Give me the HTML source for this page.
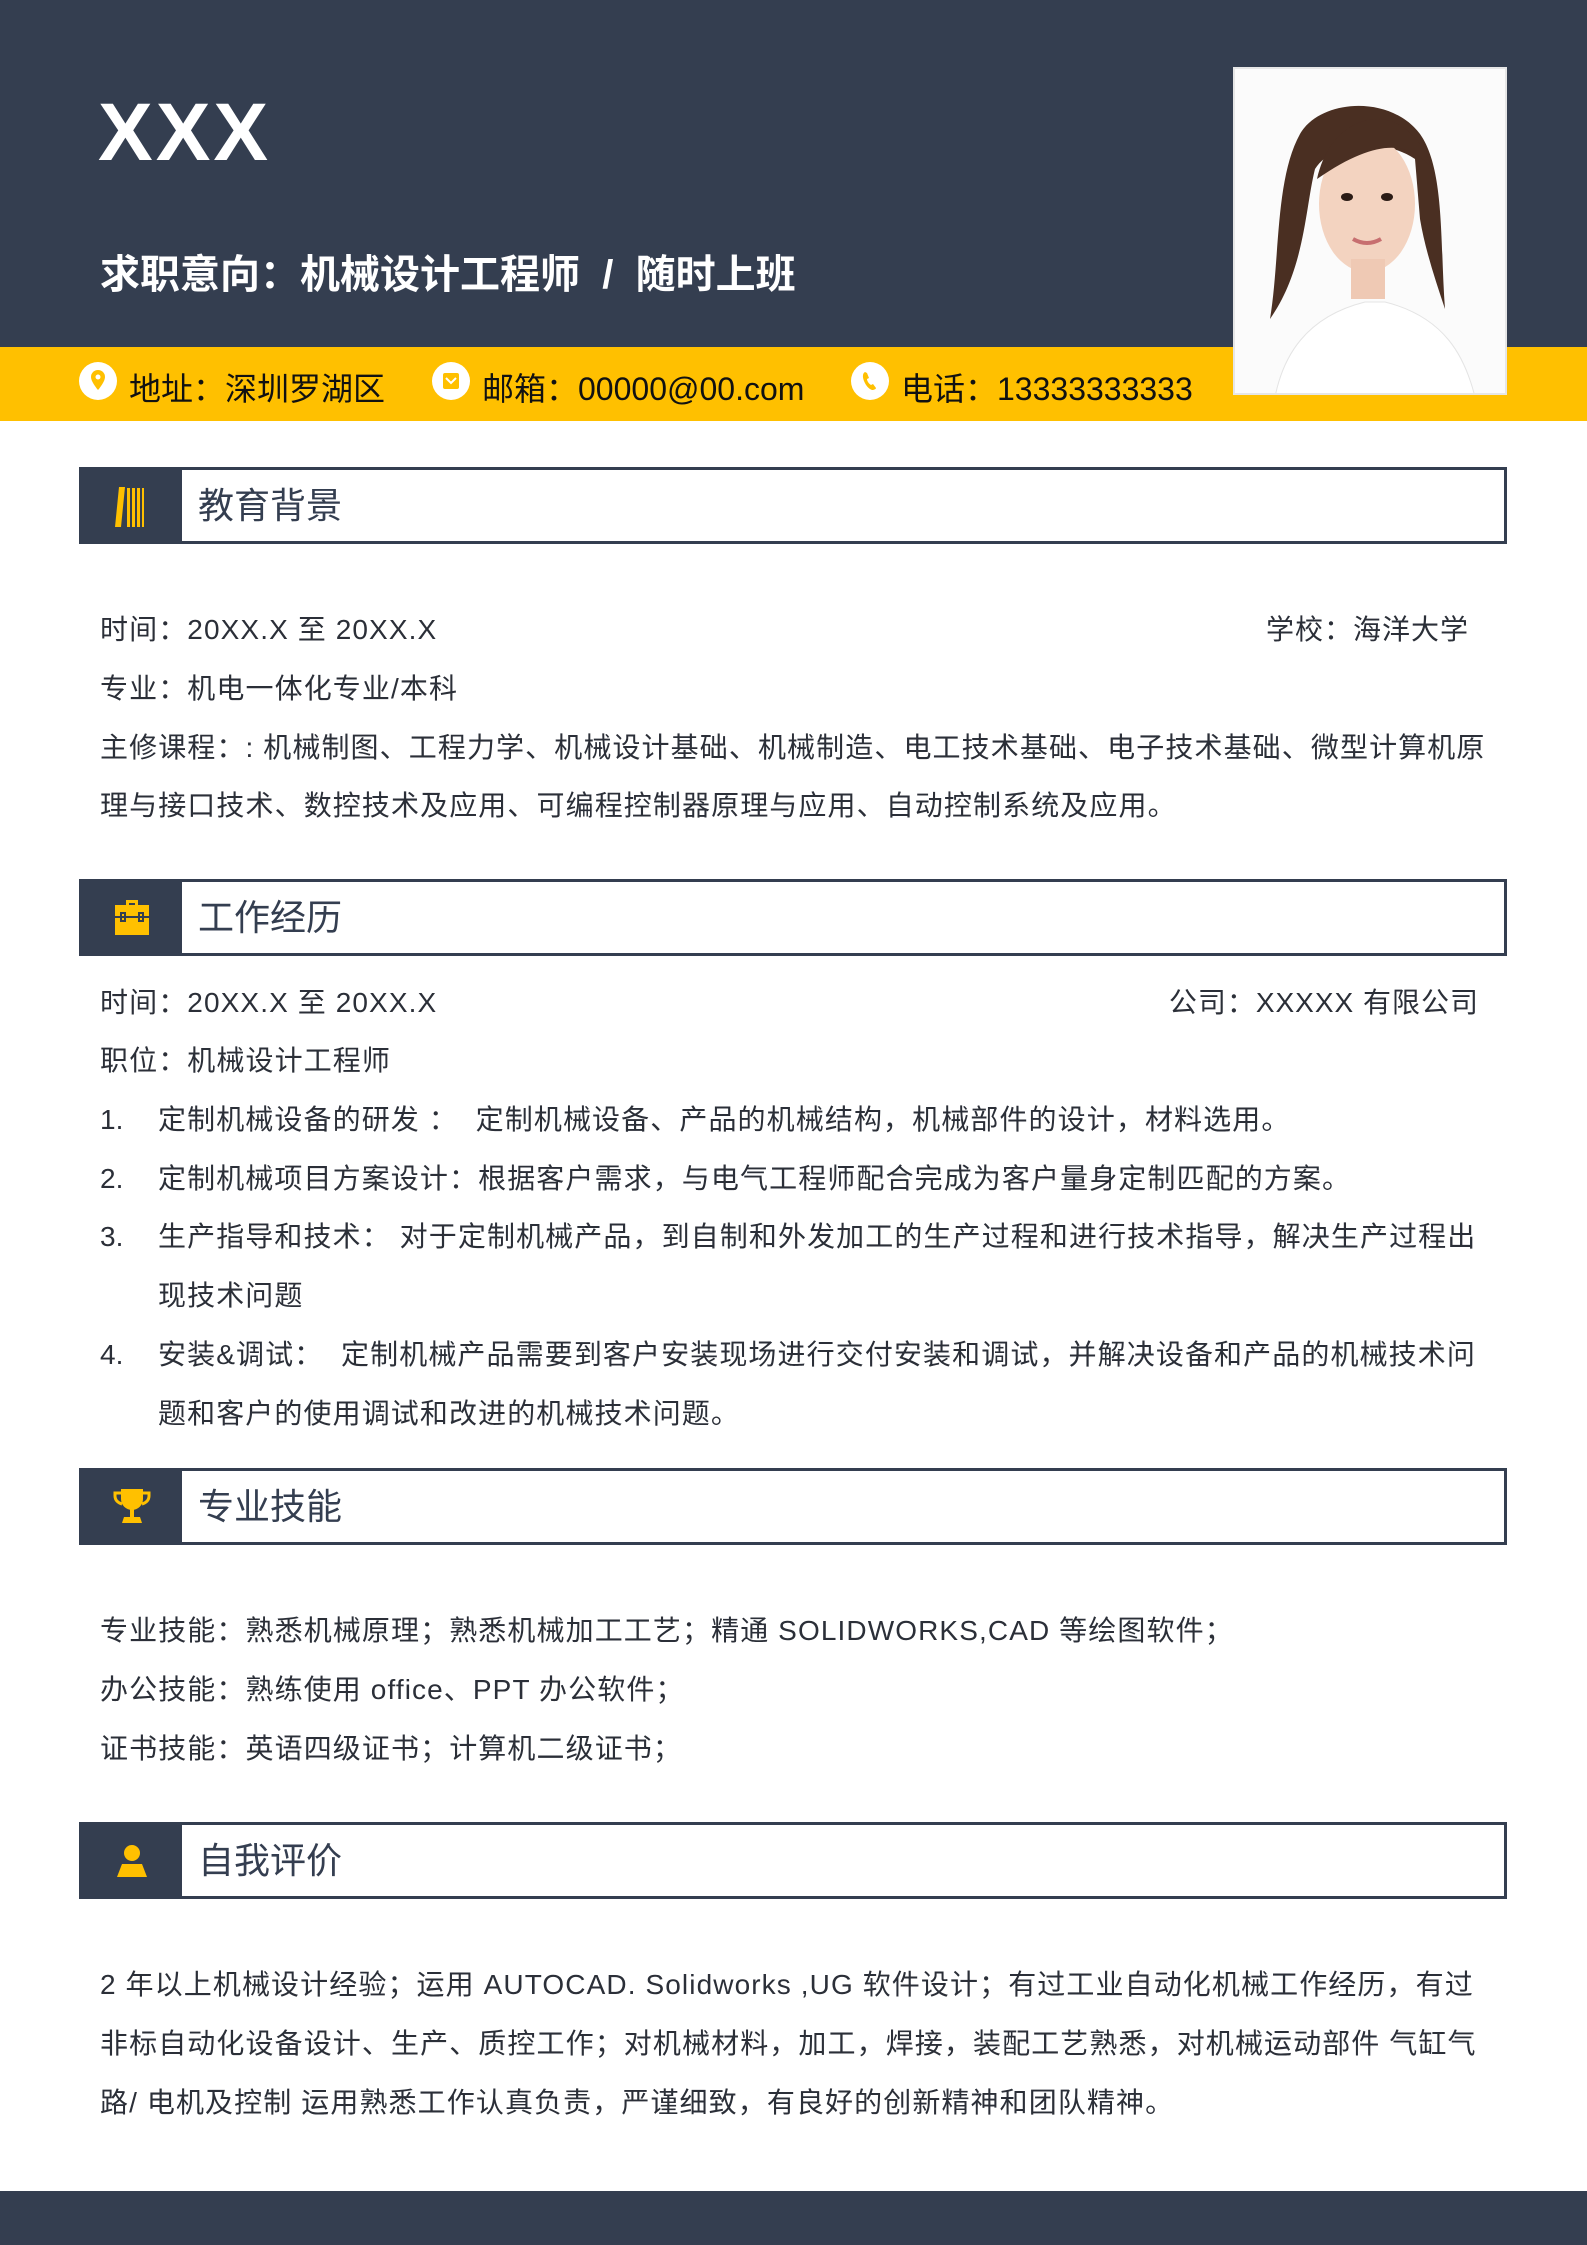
<!DOCTYPE html>
<html><head><meta charset="utf-8"><style>
*{margin:0;padding:0;box-sizing:border-box}
body{width:1587px;height:2245px;position:relative;background:#fff;font-family:"Liberation Sans","Noto Sans CJK SC",sans-serif;color:#2b2f38;overflow:hidden}
.abs{position:absolute}
.hdr{left:0;top:0;width:1587px;height:347px;background:#343e50}
.band{left:0;top:347px;width:1587px;height:74px;background:#ffc000}
.name{left:98px;top:86px;font-size:82px;font-weight:bold;color:#fff;letter-spacing:3px;font-family:"Liberation Sans",sans-serif}
.sub{left:100px;top:242px;font-size:40px;font-weight:bold;color:#fff;white-space:nowrap}
.ct{top:364px;font-size:32px;color:#111;white-space:nowrap}
.ic{top:362px;width:38px;height:38px;border-radius:50%;background:#fff}
.photo{left:1233px;top:67px;width:274px;height:328px;background:#fff;border:2px solid #e6e6e6;overflow:hidden}
.sec{left:79px;width:1428px;height:77px;border:3px solid #343e50}
.sec .dk{position:absolute;left:0;top:0;width:100px;height:100%;background:#343e50}
.sec .t{position:absolute;left:116px;top:7px;font-size:36px;color:#343e50}
.sec svg{position:absolute;left:25px;top:12px}
.ln{left:100px;font-size:28px;white-space:nowrap;letter-spacing:1.1px;line-height:40px}
.r{font-size:28px;white-space:nowrap;line-height:40px;letter-spacing:1px}
.num{left:100px;font-size:28px;line-height:40px}
.it{left:158px;font-size:28px;white-space:nowrap;letter-spacing:1.1px;line-height:40px}
.foot{left:0;top:2191px;width:1587px;height:54px;background:#343e50}
</style></head><body>
<div class="abs hdr"></div>
<div class="abs band"></div>
<div class="abs name">XXX</div>
<div class="abs sub">求职意向：机械设计工程师 &nbsp;/&nbsp; 随时上班</div>

<div class="abs ic" style="left:79px"><svg width="38" height="38"><path d="M19 8a7 7 0 0 0-7 7c0 5 7 13 7 13s7-8 7-13a7 7 0 0 0-7-7z" fill="#ffc000"/><circle cx="19" cy="15" r="2.5" fill="#fff"/></svg></div>
<div class="abs ct" style="left:129px">地址：深圳罗湖区</div>
<div class="abs ic" style="left:432px"><svg width="38" height="38"><rect x="11" y="11" width="16" height="16" rx="2" fill="#ffc000"/><path d="M14 16l5 5 5-5" stroke="#fff" stroke-width="2" fill="none"/></svg></div>
<div class="abs ct" style="left:482px">邮箱：00000@00.com</div>
<div class="abs ic" style="left:851px"><svg width="38" height="38"><path d="M14 10c-2 1-3 4-1 9s5 8 8 9c2 0 4-1 4-2l-3-4-2 1c-2-1-4-4-4-6l2-1-2-5z" fill="#ffc000"/></svg></div>
<div class="abs ct" style="left:901px">电话：13333333333</div>

<div class="abs photo"><svg width="274" height="328" viewBox="0 0 274 328">
<rect width="274" height="328" fill="#fbfbfb"/>
<path d="M40 328c8-40 30-80 90-95l20 0c60 15 80 55 90 95z" fill="#fff" stroke="#e4e4e4"/>
<path d="M35 250c10-60 5-140 30-185 20-35 90-40 120 0 25 35 20 110 25 175-10-30-20-60-25-90l-5-60c-30-20-80-20-100 10-10 40-10 100-45 150z" fill="#4a2f22"/>
<ellipse cx="132" cy="135" rx="48" ry="68" fill="#f3d3c0"/>
<rect x="116" y="190" width="34" height="40" fill="#efc9b4"/>
<path d="M82 110c10-45 40-60 60-60 25 0 45 20 55 50-20-25-50-35-115 10z" fill="#4a2f22"/>
<ellipse cx="112" cy="128" rx="6" ry="4" fill="#2b1c16"/><ellipse cx="152" cy="128" rx="6" ry="4" fill="#2b1c16"/>
<path d="M118 170q14 8 28 0" stroke="#c76f70" stroke-width="4" fill="none"/>
</svg></div>

<div class="abs sec" style="top:467px"><div class="dk"></div>
<svg width="50" height="50"><g fill="#ffc000"><path d="M12 5h6l-4 40h-6z"/><rect x="20" y="6" width="3" height="39"/><rect x="25" y="6" width="3" height="39"/><rect x="30" y="6" width="3" height="39"/><rect x="35" y="6" width="2" height="39"/></g></svg>
<div class="t">教育背景</div></div>
<div class="abs ln" style="top:610px">时间：20XX.X 至 20XX.X</div>
<div class="abs r" style="top:610px;right:118px">学校：海洋大学</div>
<div class="abs ln" style="top:669px">专业：机电一体化专业/本科</div>
<div class="abs ln" style="top:728px">主修课程：: 机械制图、工程力学、机械设计基础、机械制造、电工技术基础、电子技术基础、微型计算机原</div>
<div class="abs ln" style="top:786px">理与接口技术、数控技术及应用、可编程控制器原理与应用、自动控制系统及应用。</div>

<div class="abs sec" style="top:879px"><div class="dk"></div>
<svg width="50" height="50"><g fill="#ffc000"><path d="M19 6h12v5h-3v-2h-6v2h-3z"/><rect x="8" y="11" width="34" height="30"/></g><g stroke="#343e50" stroke-width="2" fill="none"><path d="M8 23h34"/><rect x="14" y="19" width="4" height="8"/><rect x="32" y="19" width="4" height="8"/></g></svg>
<div class="t">工作经历</div></div>
<div class="abs ln" style="top:983px">时间：20XX.X 至 20XX.X</div>
<div class="abs r" style="top:983px;right:108px">公司：XXXXX 有限公司</div>
<div class="abs ln" style="top:1041px">职位：机械设计工程师</div>
<div class="abs num" style="top:1100px">1.</div><div class="abs it" style="top:1100px">定制机械设备的研发 ：&nbsp; 定制机械设备、产品的机械结构，机械部件的设计，材料选用。</div>
<div class="abs num" style="top:1159px">2.</div><div class="abs it" style="top:1159px">定制机械项目方案设计：根据客户需求，与电气工程师配合完成为客户量身定制匹配的方案。</div>
<div class="abs num" style="top:1217px">3.</div><div class="abs it" style="top:1217px">生产指导和技术：&nbsp;对于定制机械产品，到自制和外发加工的生产过程和进行技术指导，解决生产过程出</div>
<div class="abs it" style="top:1276px">现技术问题</div>
<div class="abs num" style="top:1335px">4.</div><div class="abs it" style="top:1335px">安装&amp;调试：&nbsp; 定制机械产品需要到客户安装现场进行交付安装和调试，并解决设备和产品的机械技术问</div>
<div class="abs it" style="top:1394px">题和客户的使用调试和改进的机械技术问题。</div>

<div class="abs sec" style="top:1468px"><div class="dk"></div>
<svg width="50" height="50"><g fill="#ffc000"><path d="M14 6h22v10a11 11 0 0 1-22 0z"/><rect x="23" y="26" width="4" height="8"/><path d="M17 34h16l2 6H15z"/></g><g stroke="#ffc000" stroke-width="3" fill="none"><path d="M14 10H8v3c0 4 3 7 7 8"/><path d="M36 10h6v3c0 4-3 7-7 8"/></g></svg>
<div class="t">专业技能</div></div>
<div class="abs ln" style="top:1611px">专业技能：熟悉机械原理；熟悉机械加工工艺；精通 SOLIDWORKS,CAD 等绘图软件；</div>
<div class="abs ln" style="top:1670px">办公技能：熟练使用 office、PPT 办公软件；</div>
<div class="abs ln" style="top:1729px">证书技能：英语四级证书；计算机二级证书；</div>

<div class="abs sec" style="top:1822px"><div class="dk"></div>
<svg width="50" height="50"><g fill="#ffc000"><circle cx="25" cy="16" r="8"/><path d="M15 27h20l5 13H10z"/></g></svg>
<div class="t">自我评价</div></div>
<div class="abs ln" style="top:1965px">2 年以上机械设计经验；运用 AUTOCAD. Solidworks ,UG 软件设计；有过工业自动化机械工作经历，有过</div>
<div class="abs ln" style="top:2024px">非标自动化设备设计、生产、质控工作；对机械材料，加工，焊接，装配工艺熟悉，对机械运动部件 气缸气</div>
<div class="abs ln" style="top:2083px">路/ 电机及控制 运用熟悉工作认真负责，严谨细致，有良好的创新精神和团队精神。</div>

<div class="abs foot"></div>
</body></html>
